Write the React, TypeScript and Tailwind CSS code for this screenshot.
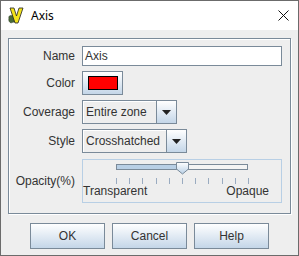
import React from 'react';

const labelCls = 'w-[66px] text-right text-[12px] text-[#333333] leading-none';

const ComboBox: React.FC<{ value: string; width: string }> = ({ value, width }) => (
  <div className={`flex h-[24px] ${width}`}>
    <div className="flex flex-1 items-center border border-[#7a8a99] bg-[#eeeeee] pl-[3px] text-[12px] text-[#333333] shadow-[inset_1px_1px_0_#ffffff]">
      {value}
    </div>
    <div className="flex w-[20px] items-center justify-center border border-l-0 border-[#7a8a99] bg-gradient-to-b from-[#ffffff] to-[#c4d6e8]">
      <svg width="9" height="5" viewBox="0 0 9 5">
        <path d="M0 0 H9 L4.5 5 Z" fill="#222222" />
      </svg>
    </div>
  </div>
);

const Slider: React.FC<{ value: number }> = ({ value }) => {
  const ticks = Array.from({ length: 11 }, (_, i) => i);
  return (
    <div className="flex h-[44px] w-[200px] flex-col border border-[#b8cfe5] bg-[#eeeeee]">
      <div className="relative ml-[33px] mt-[4px] h-[6px] w-[132px] border border-[#7a8a99] bg-[#f4f4f4]">
        <div className="h-full bg-[#b8cfe5]" style={{ width: `${value}%` }} />
        <div
          className="absolute top-[-4px]"
          style={{ left: `calc(${value}% - 8px)` }}
        >
          <svg width="15" height="14" viewBox="0 0 15 14">
            <defs>
              <linearGradient id="thumb" x1="0" y1="0" x2="0" y2="1">
                <stop offset="0" stopColor="#ffffff" />
                <stop offset="1" stopColor="#b8cfe5" />
              </linearGradient>
            </defs>
            <path d="M1.5 1.5 H13.5 V8 L7.5 13 L1.5 8 Z" fill="url(#thumb)" stroke="#7a8a99" />
          </svg>
        </div>
      </div>
      <div className="ml-[33px] mt-[8px] flex h-[6px] w-[133px] justify-between">
        {ticks.map(t => (
          <div key={t} className="h-full w-px bg-[#9aabc0]" />
        ))}
      </div>
      <div className="ml-[0px] mt-[1px] flex w-[186px] justify-between text-[12px] leading-none text-[#333333]">
        <span>Transparent</span>
        <span>Opaque</span>
      </div>
    </div>
  );
};

const DialogButton: React.FC<{ label: string }> = ({ label }) => (
  <button className="h-[26px] w-[75px] border border-[#7a8a99] bg-gradient-to-b from-[#ffffff] to-[#c4d6e8] text-[12px] text-[#333333]">
    {label}
  </button>
);

export default function App() {
  return (
    <div
      className="flex h-[256px] w-[299px] flex-col border border-[#6b6b6b] bg-[#eeeeee]"
      style={{ fontFamily: '"Liberation Sans", Arial, sans-serif' }}
    >
      {/* Title bar */}
      <div className="flex h-[29px] items-center bg-white pl-[7px] pr-[9px]">
        <svg width="16" height="17" viewBox="0 0 16 17">
          <path d="M1 11 C0 9 3 8 4 9 C5 7 8 9 7 11 C9 12 7 16 5 15 C3 17 0 15 1 11 Z" fill="#4a6b3a" stroke="#2b3b22" strokeWidth="0.6" />
          <path d="M2 1 L6 1 L8.5 9 L11 1 L15 1 L10 16 L7 16 Z" fill="#f2e21b" stroke="#222222" strokeWidth="0.8" strokeLinejoin="round" />
        </svg>
        <span className="ml-[7px] text-[12px] text-black" style={{ fontFamily: '"Noto Sans", sans-serif' }}>Axis</span>
        <div className="ml-auto">
          <svg width="11" height="11" viewBox="0 0 11 11">
            <path d="M0.5 0.5 L10.5 10.5 M10.5 0.5 L0.5 10.5" stroke="#111111" strokeWidth="1" />
          </svg>
        </div>
      </div>

      {/* Body */}
      <div className="flex flex-1 flex-col px-[7px] pt-[8px]">
        <div className="flex h-[176px] flex-col gap-[5px] border border-[#7a8a99] pt-[7px] shadow-[1px_1px_0_#ffffff,inset_1px_1px_0_#ffffff]">
          <div className="flex items-center gap-[7px]">
            <span className={labelCls}>Name</span>
            <div className="flex h-[20px] w-[200px] items-center border border-[#7a8a99] bg-white pl-[2px] text-[12px] text-[#333333]">
              Axis
            </div>
          </div>
          <div className="flex items-center gap-[7px]">
            <span className={labelCls}>Color</span>
            <div className="flex h-[24px] w-[41px] items-center justify-center border border-[#7a8a99] bg-gradient-to-b from-[#ffffff] to-[#c4d6e8]">
              <div className="h-[14px] w-[30px] border border-black bg-[#ff0000]" />
            </div>
          </div>
          <div className="flex items-center gap-[7px]">
            <span className={labelCls}>Coverage</span>
            <ComboBox value="Entire zone" width="w-[95px]" />
          </div>
          <div className="flex items-center gap-[7px]">
            <span className={labelCls}>Style</span>
            <ComboBox value="Crosshatched" width="w-[105px]" />
          </div>
          <div className="mt-[1px] flex items-center gap-[7px]">
            <span className={labelCls}>Opacity(%)</span>
            <Slider value={51} />
          </div>
        </div>

        {/* Buttons */}
        <div className="mt-[9px] flex justify-center gap-[7px]">
          <DialogButton label="OK" />
          <DialogButton label="Cancel" />
          <DialogButton label="Help" />
        </div>
      </div>
    </div>
  );
}
